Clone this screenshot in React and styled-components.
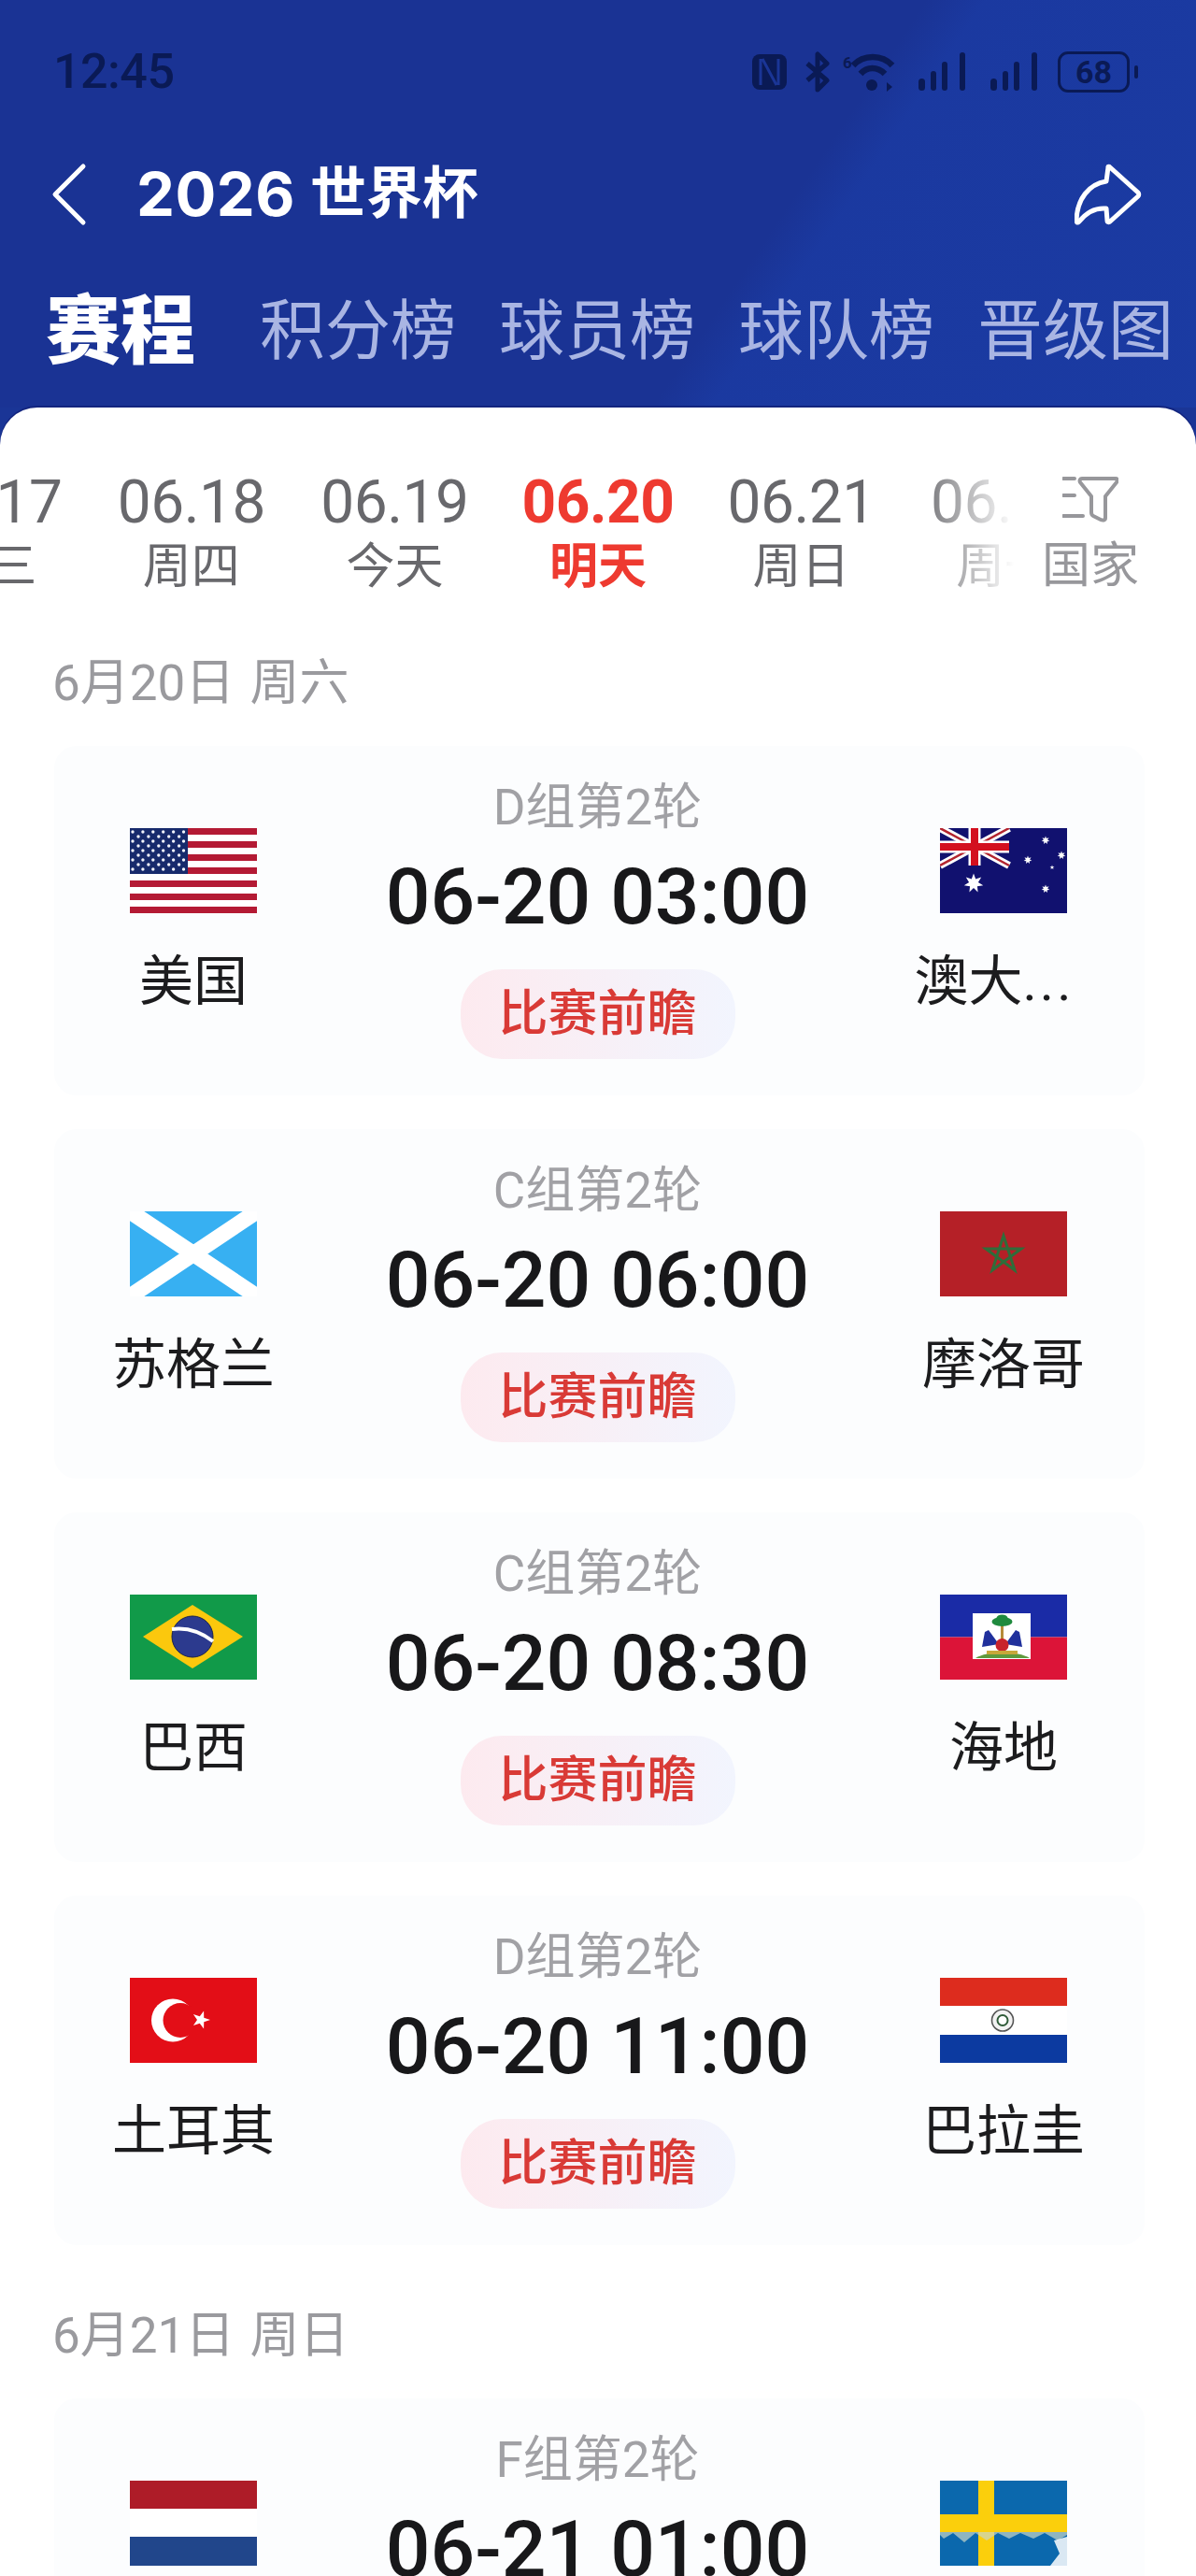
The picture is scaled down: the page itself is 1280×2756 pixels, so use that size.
import React from 'react';
import styled, { createGlobalStyle } from 'styled-components';
import { ChevronLeft } from 'lucide-react';

const GlobalStyle = createGlobalStyle`
  html, body { margin: 0; padding: 0; background: #fff; }
  * { box-sizing: border-box; }
  body { font-family: "Roboto", "Noto Sans CJK SC", sans-serif; }
`;

const Page = styled.div`
  width: 1280px;
  height: 2756px;
  overflow: hidden;
  background: #1a3596;
`;

const Header = styled.div`
  height: 436px;
  padding: 0 26px 0 52px;
  background:
    linear-gradient(124deg, rgba(27, 62, 170, 0) 63%, rgba(27, 62, 170, 0.55) 67%, rgba(27, 66, 176, 0.5) 100%),
    #1a3394;
`;

const StatusBar = styled.div`
  height: 170px;
  padding: 50px 0 0 5px;
  display: flex;
  justify-content: space-between;
  align-items: flex-start;
  color: #0a1a55;
`;

const Clock = styled.div`
  font-size: 52px;
  font-weight: 500;
  line-height: 54px;
  letter-spacing: -0.5px;
`;

const StatusIcons = styled.div`
  display: flex;
  align-items: center;
  height: 54px;
  margin-right: 45px;
`;

const TitleRow = styled.div`
  height: 76px;
  display: flex;
  align-items: center;
  justify-content: space-between;
  padding-right: 32px;
`;

const TitleLeft = styled.div`
  display: flex;
  align-items: center;
  color: #fff;
`;

const BackIcon = styled(ChevronLeft)`
  margin: -30px 12px -30px -38px;
  flex: none;
`;

const Title = styled.div`
  font-size: 60px;
  font-weight: 700;
  line-height: 70px;
  white-space: nowrap;
  display: flex;
  align-items: center;
  gap: 16px;
`;

const TitleYear = styled.span`
  font-family: "Inter", "Roboto", sans-serif;
  font-size: 65px;
  font-weight: 700;
  letter-spacing: 0.5px;
`;

const Tabs = styled.div`
  margin: 69px 0 0 -3px;
  display: flex;
  align-items: center;
  height: 80px;
`;

const Tab = styled.div`
  font-size: ${p => (p.$active ? 80 : 70)}px;
  font-weight: ${p => (p.$active ? 900 : 400)};
  color: ${p => (p.$active ? '#fff' : '#a9b5e3')};
  line-height: 80px;
  margin-right: ${p => (p.$active ? 69 : 46)}px;
  white-space: nowrap;
`;

const Sheet = styled.div`
  height: 2320px;
  background: #fff;
  border-radius: 40px 40px 0 0;
  box-shadow: 0 -2px 0 #13257f;
  position: relative;
  overflow: hidden;
`;

const DateStrip = styled.div`
  height: 204px;
  padding-top: 72px;
  display: flex;
  justify-content: center;
  position: relative;
  overflow: hidden;
`;

const DateItem = styled.div`
  flex: none;
  width: 217.6px;
  text-align: center;
  color: ${p => (p.$active ? '#ee3a30' : '#68686c')};
  font-weight: ${p => (p.$active ? 700 : 400)};
`;

const DateNum = styled.div`
  font-size: 64px;
  line-height: 60px;
  letter-spacing: -0.5px;
`;

const DateDay = styled.div`
  font-size: 52px;
  line-height: 58px;
  margin-top: 10px;
`;

const Fade = styled.div`
  position: absolute;
  top: 40px;
  bottom: 0;
  right: 0;
  width: 300px;
  background: linear-gradient(90deg, rgba(255,255,255,0) 0, #fff 105px);
`;

const FilterBox = styled.div`
  position: absolute;
  top: 74px;
  right: 58px;
  width: 110px;
  display: flex;
  flex-direction: column;
  align-items: center;
  color: #97979b;
`;

const FilterLabel = styled.div`
  font-size: 52px;
  line-height: 58px;
  margin-top: 17px;
  white-space: nowrap;
`;

const DayHeading = styled.div`
  font-size: 53px;
  line-height: 56px;
  word-spacing: 3px;
  color: #9a9a9e;
  padding-left: 56px;
  margin-top: ${p => p.$top}px;
`;

const Card = styled.div`
  margin: ${p => p.$top}px 55px 0 58px;
  height: 374px;
  background: #fcfdfe;
  border-radius: 24px;
  display: grid;
  grid-template-columns: 298px 1fr 302px;
`;

const Team = styled.div`
  display: flex;
  flex-direction: column;
  align-items: center;
  padding-top: 88px;
`;

const TeamName = styled.div`
  font-size: 58px;
  line-height: 64px;
  margin: 41px ${p => p.$nudge || 0}px 0 0;
  color: #1c1c1e;
  white-space: nowrap;
`;

const Dots = styled.span`
  letter-spacing: 3px;
`;

const Center = styled.div`
  display: flex;
  flex-direction: column;
  align-items: center;
  padding-top: 38px;
`;

const Group = styled.div`
  font-size: 53px;
  line-height: 56px;
  color: #a1a1a5;
`;

const Time = styled.div`
  font-size: 84px;
  font-weight: 500;
  line-height: 90px;
  color: #18181a;
  margin-top: 23px;
  white-space: nowrap;
`;

const Preview = styled.div`
  margin-top: 32px;
  width: 294px;
  height: 96px;
  border-radius: 44px;
  background: linear-gradient(90deg, #fdeaef 0%, #f2f5fe 100%);
  color: #d93a36;
  font-size: 53px;
  font-weight: 500;
  line-height: 96px;
  text-align: center;
`;

const FlagSvg = styled.svg`
  display: block;
  width: 136px;
  height: 91px;
  flex: none;
`;

const Flag = ({ children }) => (
  <FlagSvg viewBox="0 0 136 91" preserveAspectRatio="none">{children}</FlagSvg>
);

const star = (cx, cy, r, color, n = 5, rot = -90) => {
  const pts = [];
  const inner = n === 5 ? 0.4 : 0.48;
  for (let i = 0; i < n * 2; i++) {
    const rad = i % 2 ? r * inner : r;
    const a = ((rot + (i * 180) / n) * Math.PI) / 180;
    pts.push(`${(cx + rad * Math.cos(a)).toFixed(2)},${(cy + rad * Math.sin(a)).toFixed(2)}`);
  }
  return <polygon points={pts.join(' ')} fill={color} />;
};

const UsaFlag = () => {
  const stars = [];
  for (let r = 0; r < 9; r++) {
    const n = r % 2 ? 5 : 6;
    for (let c = 0; c < n; c++) {
      stars.push(<circle key={`${r}-${c}`} cx={(r % 2 ? 9 : 3) + c * 10.9} cy={4 + r * 5} r="1.7" fill="#f2f4fb" />);
    }
  }
  return (
    <Flag>
      <rect width="136" height="91" fill="#fff" />
      {[0, 2, 4, 6, 8, 10, 12].map(i => (
        <rect key={i} y={i * 7} width="136" height="7" fill="#b41a34" />
      ))}
      <rect width="62" height="49" fill="#172a6c" />
      {stars}
    </Flag>
  );
};

const AusFlag = () => (
  <Flag>
    <rect width="136" height="91" fill="#11116f" />
    <path d="M0 0L74 40M74 0L0 40" stroke="#fff" strokeWidth="8" />
    <path d="M0 0L74 40M74 0L0 40" stroke="#b3242f" strokeWidth="2.5" />
    <path d="M37 0V40M0 20H74" stroke="#fff" strokeWidth="13" />
    <path d="M37 0V40M0 20H74" stroke="#d3101f" strokeWidth="8" />
    {star(36, 59, 10.5, '#fff', 7)}
    {star(113, 13, 4.5, '#fff', 7)}
    {star(130, 29, 4.5, '#fff', 7)}
    {star(94, 34, 4.5, '#fff', 7)}
    {star(120, 42, 2.6, '#fff')}
    {star(113, 65, 4.5, '#fff', 7)}
  </Flag>
);

const ScotlandFlag = () => (
  <Flag>
    <rect width="136" height="91" fill="#37b0f2" />
    <path d="M0 0L136 91M136 0L0 91" stroke="#fff" strokeWidth="17" />
  </Flag>
);

const MoroccoFlag = () => (
  <Flag>
    <rect width="136" height="91" fill="#b52027" />
    <polygon points="68,26 80,63 49,40 87,40 56,63" fill="none" stroke="#2f6d3a" strokeWidth="3" />
  </Flag>
);

const BrazilFlag = () => (
  <Flag>
    <rect width="136" height="91" fill="#119a49" />
    <polygon points="67,11 121,45 67,79 14,45" fill="#fbc80d" />
    <circle cx="67" cy="45" r="22" fill="#2c3a8e" stroke="#17204f" strokeWidth="1" />
    <path d="M45 37C60 35 76 40 89 50" stroke="#fff" strokeWidth="4" fill="none" />
  </Flag>
);

const HaitiFlag = () => (
  <Flag>
    <rect width="136" height="45.5" fill="#1a2ba6" />
    <rect y="45.5" width="136" height="45.5" fill="#dc1438" />
    <rect x="35" y="20" width="62" height="49" fill="#fff" />
    <rect x="65" y="30" width="3" height="24" fill="#b58b3a" />
    <ellipse cx="66.5" cy="29" rx="11" ry="5" fill="#1f8a3e" />
    <ellipse cx="66.5" cy="25" rx="6" ry="3.5" fill="#1f8a3e" />
    <path d="M45 56L48 40L52 38L63 53Z" fill="#20309c" />
    <path d="M88 56L85 40L81 38L70 53Z" fill="#20309c" />
    <circle cx="66.5" cy="54" r="7" fill="#c8242c" />
    <path d="M38 68C50 60 84 60 96 68Z" fill="#5f9a3e" />
    <rect x="50" y="60" width="33" height="4" fill="#c8a83a" />
  </Flag>
);

const TurkeyFlag = () => (
  <Flag>
    <rect width="136" height="91" fill="#e30e17" />
    <circle cx="46" cy="45.5" r="23" fill="#fff" />
    <circle cx="54" cy="45.5" r="18.5" fill="#e30e17" />
    {star(76, 45, 10, '#fff', 5, -72)}
  </Flag>
);

const ParaguayFlag = () => (
  <Flag>
    <rect width="136" height="30" fill="#dd2c1e" />
    <rect y="30" width="136" height="31" fill="#fff" />
    <rect y="61" width="136" height="30" fill="#0c3aa0" />
    <circle cx="67" cy="45.5" r="11.5" fill="#f2f2f2" stroke="#555" strokeWidth="1.6" />
    <circle cx="67" cy="45.5" r="5.5" fill="#fff" stroke="#2f5b38" strokeWidth="2" />
  </Flag>
);

const NetherlandsFlag = () => (
  <Flag>
    <rect width="136" height="30" fill="#ae1c28" />
    <rect y="30" width="136" height="31" fill="#fff" />
    <rect y="60" width="136" height="31" fill="#21468b" />
  </Flag>
);

const SwedenFlag = () => (
  <Flag>
    <rect width="136" height="91" fill="#0b68ad" />
    <rect x="41" width="17" height="91" fill="#fbcf0c" />
    <rect y="36" width="136" height="19" fill="#fbcf0c" />
    <path d="M0 55H136V58L126 64L112 56L100 62L86 56L74 62L62 56L50 64L38 56L26 66L14 56L4 62L0 58Z" fill="#c8d5c8" opacity="0.7" />
    <path d="M118 91L128 78L122 64L136 60V91Z" fill="#fff" opacity="0.85" />
  </Flag>
);

const NfcIcon = () => (
  <svg width="37" height="40" viewBox="0 0 37 40" fill="none">
    <rect x="0" y="1" width="37" height="38" rx="8" fill="#0a1a55" />
    <path d="M9 6V34M28 6V34M11 6L26 34" stroke="#1a3596" strokeWidth="3" />
  </svg>
);

const BtIcon = () => (
  <svg width="26" height="44" viewBox="0 0 26 44" fill="none" stroke="#0a1a55" strokeWidth="5" strokeLinejoin="round">
    <path d="M2 31L23 13L13 3V41L23 31L2 13" />
  </svg>
);

const WifiIcon = () => (
  <svg width="58" height="44" viewBox="0 0 58 44" fill="none">
    <text x="0" y="18" fontSize="17" fontWeight="700" fill="#0a1a55" fontFamily="Roboto, sans-serif">6</text>
    <path d="M11 15C22 3 42 3 53 15M19 24C26 16 37 16 45 24" stroke="#0a1a55" strokeWidth="6.5" />
    <circle cx="31" cy="36" r="6" fill="#0a1a55" />
    <path d="M47 33L53 38L47 43Z" fill="#0a1a55" />
  </svg>
);

const SignalIcon = () => (
  <svg width="52" height="42" viewBox="0 0 52 42" fill="#0a1a55">
    <rect x="0" y="28" width="7" height="13" rx="3.5" />
    <rect x="13" y="20" width="6" height="21" rx="3" />
    <rect x="25" y="10" width="6" height="31" rx="3" />
    <rect x="44" y="0" width="6" height="41" rx="3" />
  </svg>
);

const BatteryBox = styled.div`
  width: 77px;
  height: 44px;
  border: 3px solid #0a1a55;
  border-radius: 11px;
  font-size: 34px;
  font-weight: 700;
  line-height: 38px;
  text-align: center;
  position: relative;
`;

const BatteryTip = styled.span`
  position: absolute;
  right: -12px;
  top: 12px;
  width: 4px;
  height: 14px;
  border-radius: 2px;
  background: #0a1a55;
`;

const StatusGap = styled.span`
  width: ${p => p.$w}px;
`;

const ShareIcon = () => (
  <svg width="72" height="66" viewBox="0 0 72 66" fill="none" stroke="#fff" strokeWidth="5" strokeLinejoin="round">
    <path d="M36 4C36 3 37 3 38 4L68 31C69 32 69 34 68 35L38 62C37 63 35 63 35 61L34 48C22 47 12 53 5 62C3 64 2 63 2 60C3 38 15 22 34 19Z" />
  </svg>
);

const FilterIcon = () => (
  <svg width="60" height="50" viewBox="0 0 60 50" fill="none" stroke="#97979b" strokeWidth="4" strokeLinecap="round" strokeLinejoin="round">
    <path d="M1 2H13M1 20H13M1 42H22" />
    <path d="M21 2H57C59 2 59 4 58 6L46 21V44C46 47 43 47 41 46L33 42C31 41 31 40 31 38V21L19 6C18 4 19 2 21 2Z" />
  </svg>
);

const matches = [
  { group: 'D组第2轮', time: '06-20 03:00', home: '美国', HomeFlag: UsaFlag, away: <>澳大<Dots>...</Dots></>, awayNudge: 20, AwayFlag: AusFlag },
  { group: 'C组第2轮', time: '06-20 06:00', home: '苏格兰', HomeFlag: ScotlandFlag, away: '摩洛哥', AwayFlag: MoroccoFlag },
  { group: 'C组第2轮', time: '06-20 08:30', home: '巴西', HomeFlag: BrazilFlag, away: '海地', AwayFlag: HaitiFlag },
  { group: 'D组第2轮', time: '06-20 11:00', home: '土耳其', HomeFlag: TurkeyFlag, away: '巴拉圭', AwayFlag: ParaguayFlag },
];

const lastMatch = { group: 'F组第2轮', time: '06-21 01:00', HomeFlag: NetherlandsFlag, AwayFlag: SwedenFlag };

const dates = [
  { num: '06.17', day: '周三' },
  { num: '06.18', day: '周四' },
  { num: '06.19', day: '今天' },
  { num: '06.20', day: '明天', active: true },
  { num: '06.21', day: '周日' },
  { num: '06.22', day: '周一' },
  { num: '', day: '' },
];

const MatchCard = ({ match, top, preview = true }) => (
  <Card $top={top}>
    <Team>
      <match.HomeFlag />
      {match.home && <TeamName>{match.home}</TeamName>}
    </Team>
    <Center>
      <Group>{match.group}</Group>
      <Time>{match.time}</Time>
      {preview && <Preview>比赛前瞻</Preview>}
    </Center>
    <Team>
      <match.AwayFlag />
      {match.away && <TeamName $nudge={match.awayNudge}>{match.away}</TeamName>}
    </Team>
  </Card>
);

export default function App() {
  return (
    <Page>
      <GlobalStyle />
      <Header>
        <StatusBar>
          <Clock>12:45</Clock>
          <StatusIcons>
            <NfcIcon />
            <StatusGap $w={20} />
            <BtIcon />
            <StatusGap $w={14} />
            <WifiIcon />
            <StatusGap $w={23} />
            <SignalIcon />
            <StatusGap $w={25} />
            <SignalIcon />
            <StatusGap $w={20} />
            <BatteryBox>68<BatteryTip /></BatteryBox>
          </StatusIcons>
        </StatusBar>
        <TitleRow>
          <TitleLeft>
            <BackIcon size={120} strokeWidth={1} />
            <Title><TitleYear>2026</TitleYear>世界杯</Title>
          </TitleLeft>
          <ShareIcon />
        </TitleRow>
        <Tabs>
          <Tab $active>赛程</Tab>
          <Tab>积分榜</Tab>
          <Tab>球员榜</Tab>
          <Tab>球队榜</Tab>
          <Tab>晋级图</Tab>
        </Tabs>
      </Header>
      <Sheet>
        <DateStrip>
          {dates.map((d, i) => (
            <DateItem key={i} $active={d.active}>
              <DateNum>{d.num}</DateNum>
              <DateDay>{d.day}</DateDay>
            </DateItem>
          ))}
          <Fade />
          <FilterBox>
            <FilterIcon />
            <FilterLabel>国家</FilterLabel>
          </FilterBox>
        </DateStrip>
        <DayHeading $top={63}>6月20日 周六</DayHeading>
        {matches.map((m, i) => (
          <MatchCard key={m.time} match={m} top={i === 0 ? 39 : 36} />
        ))}
        <DayHeading $top={69}>6月21日 周日</DayHeading>
        <MatchCard top={39} preview={false} match={lastMatch} />
      </Sheet>
    </Page>
  );
}
